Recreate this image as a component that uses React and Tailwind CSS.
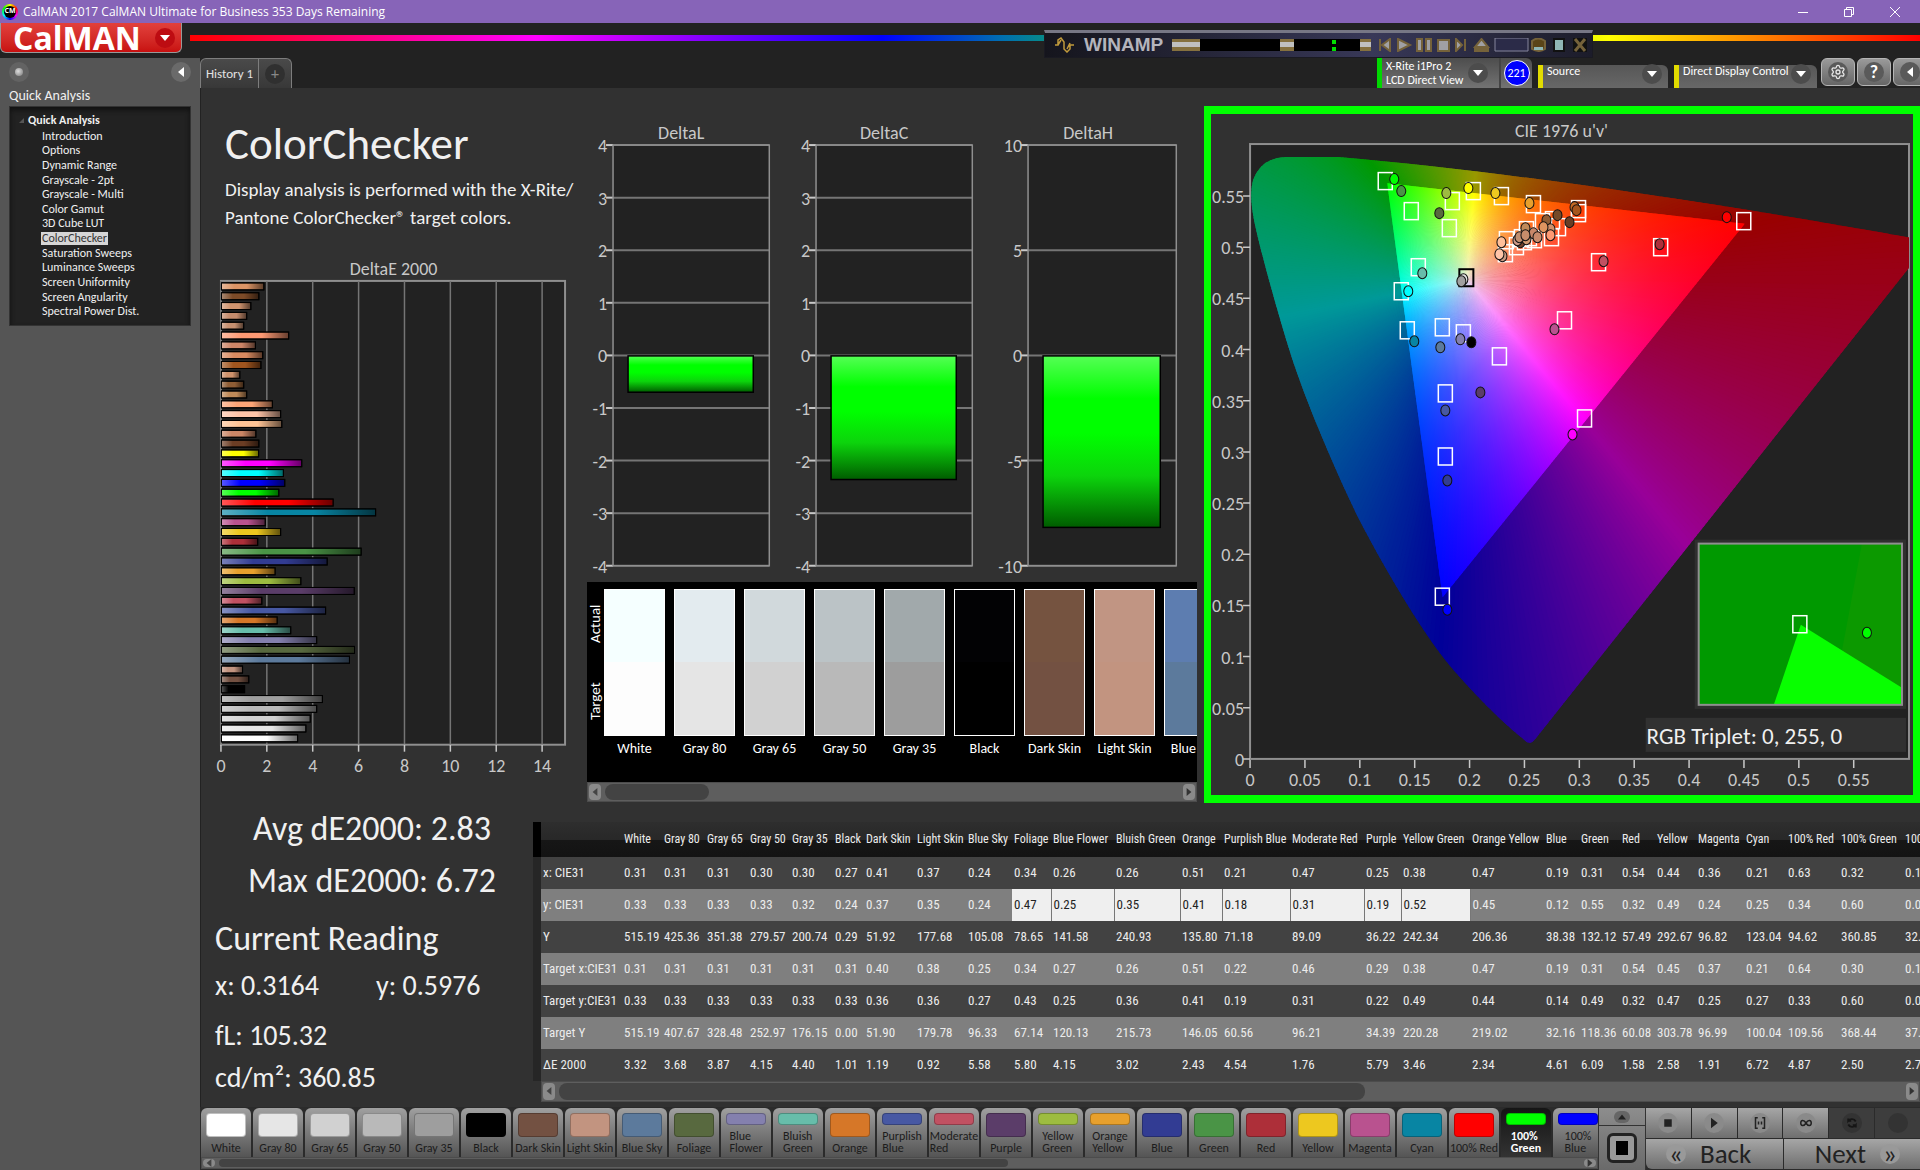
import React from 'react';
import { Settings } from 'lucide-react';

const PAGES = [
  'Introduction', 'Options', 'Dynamic Range', 'Grayscale - 2pt', 'Grayscale - Multi', 'Color Gamut', '3D Cube LUT',
  'ColorChecker', 'Saturation Sweeps', 'Luminance Sweeps', 'Screen Uniformity', 'Screen Angularity', 'Spectral Power Dist.',
];

// top to bottom, as the chart shows them: [dE2000, color]
const DELTA_E = [
  [1.85, '#dc9465'], [1.63, '#7d4b28'], [1.28, '#d0946f'], [1.1, '#c58b6c'], [0.97, '#c79070'], [2.93, '#fd9973'],
  [1.48, '#cd8567'], [1.8, '#d98a60'], [1.72, '#a0551f'], [0.8, '#d0926c'], [0.97, '#8f5d35'], [1.1, '#c08a58'],
  [2.22, '#fda577'], [2.58, '#ffc4a8'], [2.63, '#ffc496'], [1.5, '#cb8666'], [1.63, '#6b3d24'], [1.62, '#ffff00'],
  [3.5, '#ff00ff'], [2.7, '#00ffff'], [2.76, '#0000ff'], [2.5, '#00ff00'], [4.87, '#ff0000'], [6.72, '#0885a3'],
  [1.91, '#b9528f'], [2.58, '#edc81f'], [1.58, '#ad2f39'], [6.09, '#4a9446'], [4.61, '#323c93'], [2.34, '#e7a02d'],
  [3.46, '#9dbc40'], [5.79, '#5b3d69'], [1.76, '#c15162'], [4.54, '#4758a3'], [2.43, '#d67728'], [3.02, '#67bdaa'],
  [4.15, '#8480ae'], [5.8, '#58693f'], [5.58, '#5c7a9c'], [0.92, '#c29480'], [1.19, '#735142'], [1.01, '#000000'],
  [4.4, '#9e9e9e'], [4.15, '#b9b9b9'], [3.87, '#d1d1d1'], [3.68, '#e6e6e6'], [3.32, '#ffffff'],
];

const SWATCHES = [
  ['White', '#f5ffff', '#fdfdfd'],
  ['Gray 80', '#e3ebef', '#e5e5e5'],
  ['Gray 65', '#d1d9dc', '#d1d1d1'],
  ['Gray 50', '#bbc3c6', '#b9b9b9'],
  ['Gray 35', '#a1a9ab', '#9d9d9d'],
  ['Black', '#020204', '#000000'],
  ['Dark Skin', '#755340', '#735142'],
  ['Light Skin', '#c19583', '#c29480'],
  ['Blue Sky', '#5d7db0', '#5c7a9c'],
];

// [name, width, x, y, Y, target x, target y, target Y, dE]
const COLUMNS = [
  ['White', 40, '0.31', '0.33', '515.19', '0.31', '0.33', '515.19', '3.32'],
  ['Gray 80', 43, '0.31', '0.33', '425.36', '0.31', '0.33', '407.67', '3.68'],
  ['Gray 65', 43, '0.31', '0.33', '351.38', '0.31', '0.33', '328.48', '3.87'],
  ['Gray 50', 42, '0.30', '0.33', '279.57', '0.31', '0.33', '252.97', '4.15'],
  ['Gray 35', 43, '0.30', '0.32', '200.74', '0.31', '0.33', '176.15', '4.40'],
  ['Black', 31, '0.27', '0.24', '0.29', '0.31', '0.33', '0.00', '1.01'],
  ['Dark Skin', 51, '0.41', '0.37', '51.92', '0.40', '0.36', '51.90', '1.19'],
  ['Light Skin', 51, '0.37', '0.35', '177.68', '0.38', '0.36', '179.78', '0.92'],
  ['Blue Sky', 46, '0.24', '0.24', '105.08', '0.25', '0.27', '96.33', '5.58'],
  ['Foliage', 39, '0.34', '0.47', '78.65', '0.34', '0.43', '67.14', '5.80'],
  ['Blue Flower', 63, '0.26', '0.25', '141.58', '0.27', '0.25', '120.13', '4.15'],
  ['Bluish Green', 66, '0.26', '0.35', '240.93', '0.26', '0.36', '215.73', '3.02'],
  ['Orange', 42, '0.51', '0.41', '135.80', '0.51', '0.41', '146.05', '2.43'],
  ['Purplish Blue', 68, '0.21', '0.18', '71.18', '0.22', '0.19', '60.56', '4.54'],
  ['Moderate Red', 74, '0.47', '0.31', '89.09', '0.46', '0.31', '96.21', '1.76'],
  ['Purple', 37, '0.25', '0.19', '36.22', '0.29', '0.22', '34.39', '5.79'],
  ['Yellow Green', 69, '0.38', '0.52', '242.34', '0.38', '0.49', '220.28', '3.46'],
  ['Orange Yellow', 74, '0.47', '0.45', '206.36', '0.47', '0.44', '219.02', '2.34'],
  ['Blue', 35, '0.19', '0.12', '38.38', '0.19', '0.14', '32.16', '4.61'],
  ['Green', 41, '0.31', '0.55', '132.12', '0.31', '0.49', '118.36', '6.09'],
  ['Red', 35, '0.54', '0.32', '57.49', '0.54', '0.32', '60.08', '1.58'],
  ['Yellow', 41, '0.44', '0.49', '292.67', '0.45', '0.47', '303.78', '2.58'],
  ['Magenta', 48, '0.36', '0.24', '96.82', '0.37', '0.25', '96.99', '1.91'],
  ['Cyan', 42, '0.21', '0.25', '123.04', '0.21', '0.27', '100.04', '6.72'],
  ['100% Red', 53, '0.63', '0.34', '94.62', '0.64', '0.33', '109.56', '4.87'],
  ['100% Green', 64, '0.32', '0.60', '360.85', '0.30', '0.60', '368.44', '2.50'],
  ['100% Blue', 56, '0.15', '0.05', '32.51', '0.15', '0.06', '37.18', '2.76'],
];

const ROWS = ['x: CIE31', 'y: CIE31', 'Y', 'Target x:CIE31', 'Target y:CIE31', 'Target Y', 'ΔE 2000'];

const PATCHES = [
  ['White', '#ffffff'], ['Gray 80', '#e6e6e6'], ['Gray 65', '#d1d1d1'], ['Gray 50', '#b9b9b9'], ['Gray 35', '#9e9e9e'],
  ['Black', '#000000'], ['Dark Skin', '#735142'], ['Light Skin', '#c29480'], ['Blue Sky', '#5c7a9c'], ['Foliage', '#58693f'],
  ['Blue\nFlower', '#8480ae'], ['Bluish\nGreen', '#67bdaa'], ['Orange', '#d67728'], ['Purplish\nBlue', '#4758a3'],
  ['Moderate\nRed', '#c15162'], ['Purple', '#5b3d69'], ['Yellow\nGreen', '#9dbc40'], ['Orange\nYellow', '#e7a02d'],
  ['Blue', '#323c93'], ['Green', '#4a9446'], ['Red', '#ad2f39'], ['Yellow', '#edc81f'], ['Magenta', '#b9528f'],
  ['Cyan', '#0885a3'], ['100% Red', '#ff0000'], ['100%\nGreen', '#00ff00'], ['100%\nBlue', '#0000ff'],
];

const TARGETS = [
  [174, 67], [200, 97], [241, 87], [262, 77], [290, 82], [238, 114], [322, 90], [367, 95], [367, 99], [532, 107],
  [449, 133], [387, 148], [207, 153], [190, 177], [196, 216], [231, 213], [252, 219], [288, 242], [234, 279],
  [353, 206], [373, 304], [234, 342], [231, 482], [294, 139], [295, 126], [305, 132], [310, 124], [315, 116],
  [331, 108], [341, 106], [347, 113], [340, 123], [323, 125], [313, 127], [318, 123],
];

const READINGS = [
  [183, 65, '#00ff00'], [190, 77, '#4a9446'], [235, 79, '#9dbc40'], [228, 99, '#58693f'], [257, 74, '#ffff00'],
  [284, 79, '#edc81f'], [318, 89, '#e7a02d'], [363, 93, '#c46a25'], [365, 96, '#a6561e'], [515, 103, '#ff0000'],
  [448, 130, '#ad2f39'], [392, 147, '#c15162'], [211, 159, '#67bdaa'], [197, 177, '#00ffff'], [203, 227, '#0885a3'],
  [229, 233, '#5c7a9c'], [249, 225, '#8480ae'], [260, 228, '#000000'], [269, 278, '#5b3d69'], [234, 296, '#4758a3'],
  [343, 215, '#b9528f'], [361, 320, '#ff00ff'], [236, 366, '#323c93'], [236, 495, '#0000ff'], [252, 165, '#e6e6e6'],
  [250, 167, '#a0a0a0'], [346, 101, '#754a28'], [358, 108, '#6b3d24'], [335, 106, '#8f5d35'], [339, 115, '#d0906a'],
  [332, 113, '#e09560'], [339, 121, '#fd9973'], [322, 119, '#c9886a'], [326, 123, '#c98b6c'], [314, 114, '#c08a58'],
  [309, 128, '#704028'], [306, 126, '#cc9988'], [315, 125, '#d09a70'], [308, 123, '#c28f70'], [314, 121, '#c78d6b'],
  [290, 128, '#ffc09a'], [291, 142, '#c89880'], [288, 140, '#ffc4a8'],
];

/* ---------- chromaticity diagram ---------- */

const toX = (u) => 39 + u * 1096;
const toY = (v) => 644 - v * 1022;
const WHITE = [toX(0.1978), toY(0.4683)];
const GAMUT = [[toX(0.4507), toY(0.5229)], [toX(0.125), toY(0.5625)], [toX(0.1754), toY(0.1579)]];

function colorAt(px, py, level) {
  const u = (px - 39) / 1096;
  const v = (644 - py) / 1022;
  const d = 6 * u - 16 * v + 12;
  const x = (9 * u) / d;
  const y = (4 * v) / d;
  const z = 1 - x - y;
  const rgb = [
    3.2406 * x - 1.5372 * y - 0.4986 * z,
    -0.9689 * x + 1.8758 * y + 0.0415 * z,
    0.0557 * x - 0.204 * y + 1.057 * z,
  ].map((c) => Math.max(0, c));
  const max = Math.max(...rgb);
  return `rgb(${rgb.map((c) => Math.round((255 * level * c) / max)).join(',')})`;
}

// distance from the white point to the gamut edge along an angle
function edgeDistance(angle) {
  const dx = Math.cos(angle);
  const dy = Math.sin(angle);
  let best = Infinity;
  GAMUT.forEach(([ax, ay], i) => {
    const [bx, by] = GAMUT[(i + 1) % 3];
    const ex = bx - ax;
    const ey = by - ay;
    const det = ex * dy - ey * dx;
    if (Math.abs(det) < 1e-9) return;
    const t = (ex * (ay - WHITE[1]) - ey * (ax - WHITE[0])) / det;
    if (t > 0 && t < best) best = t;
  });
  return best;
}

const STOPS = [0, 0.1, 0.2, 0.35, 0.5, 0.65, 0.8, 1];
const STEP = Math.PI / 240;
const WEDGES = Array.from({ length: 480 }, (_, i) => {
  const a = i * STEP;
  const mid = a + STEP / 2;
  const r = edgeDistance(mid);
  const at = (angle, dist) => [WHITE[0] + Math.cos(angle) * dist, WHITE[1] + Math.sin(angle) * dist];
  const edge = at(mid, r);
  return {
    points: [WHITE, at(a, 900), at(a + STEP * 1.8, 900)].map((p) => p.join(',')).join(' '),
    edge,
    outer: colorAt(edge[0], edge[1], 0.6),
    stops: STOPS.map((s) => {
      const p = at(mid, r * s);
      return [s, colorAt(p[0], p[1], 1)];
    }),
  };
});

const LOCUS =
  'M74 43 L127 43 C300 58 500 88 718 127 L323 625 Q318 631 313 625 C285 603 250 565 237 549 C215 522 180 467 147 403 C128 364 100 300 84 253 C72 218 50 140 43 106 Q38 80 42 66 Q50 44 74 43Z';

function CieChart() {
  const xs = Array.from({ length: 12 }, (_, i) => Math.round(i * 5) / 100);
  return (
    <svg viewBox="0 0 701 680" className="block w-full" fontSize="18" fill="#c8c8c8" role="img" aria-label="CIE 1976 u'v' diagram">
      <defs>
        <clipPath id="plot"><rect x="39" y="30" width="658" height="614" /></clipPath>
        <clipPath id="locus" clipPath="url(#plot)"><path d={LOCUS} /></clipPath>
        <clipPath id="gamut"><polygon points={GAMUT.map((p) => p.join(',')).join(' ')} /></clipPath>
        {WEDGES.map((w, i) => (
          <linearGradient key={i} id={`w${i}`} gradientUnits="userSpaceOnUse" x1={WHITE[0]} y1={WHITE[1]} x2={w.edge[0]} y2={w.edge[1]}>
            {w.stops.map(([s, c]) => <stop key={s} offset={s} stopColor={c} />)}
          </linearGradient>
        ))}
      </defs>
      <text x="350" y="23" textAnchor="middle">CIE 1976 u'v'</text>
      <rect x="39" y="30" width="658" height="614" fill="#222222" stroke="#8f8f8f" strokeWidth="2" />
      <g clipPath="url(#locus)">
        {WEDGES.map((w, i) => <polygon key={i} points={w.points} fill={w.outer} />)}
      </g>
      <g clipPath="url(#gamut)">
        {WEDGES.map((w, i) => <polygon key={i} points={w.points} fill={`url(#w${i})`} />)}
      </g>
      <g fill="none" stroke="#ffffff" strokeWidth="1.5">
        {TARGETS.map(([x, y], i) => <rect key={i} x={x - 7} y={y - 8.5} width="14" height="17" />)}
      </g>
      <rect x="248" y="155" width="14" height="17" fill="none" stroke="#000000" strokeWidth="2" />
      {READINGS.map(([x, y, c], i) => <ellipse key={i} cx={x} cy={y} rx="4.5" ry="5.5" fill={c} stroke="#111111" />)}

      {xs.map((v) => (
        <g key={v}>
          <path d={`M${toX(v)} 645v8M39 ${toY(v)}h-7`} stroke="#c8c8c8" strokeWidth="1.5" />
          <text x={toX(v)} y="671" textAnchor="middle">{v}</text>
          <text x="33" y={toY(v) + 7} textAnchor="end">{v}</text>
        </g>
      ))}

      <rect x="483" y="425" width="211" height="169" fill="#2f2f2f" />
      <rect x="487" y="429" width="203" height="161" fill="#009900" />
      <path d="M650 429h40v161h-70z" fill="#0c9900" />
      <path d="M589 510L562 590h128v-17z" fill="#08ff00" />
      <rect x="487" y="429" width="203" height="161" fill="none" stroke="#8f8f8f" strokeWidth="2" />
      <rect x="581" y="501" width="14" height="17" fill="none" stroke="#ffffff" strokeWidth="1.5" />
      <ellipse cx="655" cy="518" rx="4.5" ry="5.5" fill="#00ff00" stroke="#111111" />
      <rect x="434" y="603" width="260" height="34" fill="#313131" />
      <text x="435" y="629" fontSize="23" fill="#f0f0f0">RGB Triplet: 0, 255, 0</text>
    </svg>
  );
}

/* ---------- bar charts ---------- */

function DeltaEChart() {
  return (
    <svg viewBox="0 0 387 540" className="block w-full" fontSize="18" fill="#c8c8c8" role="img" aria-label="DeltaE 2000">
      <defs>
        <linearGradient id="gloss">
          <stop offset="0" stopColor="#ffffff" stopOpacity="0.35" />
          <stop offset="0.3" stopColor="#ffffff" stopOpacity="0" />
          <stop offset="0.6" stopColor="#000000" stopOpacity="0" />
          <stop offset="1" stopColor="#000000" stopOpacity="0.6" />
        </linearGradient>
      </defs>
      <text x="193" y="25" textAnchor="middle">DeltaE 2000</text>
      <rect x="20" y="31" width="345" height="465" fill="#222222" stroke="#8f8f8f" strokeWidth="2" />
      {[0, 2, 4, 6, 8, 10, 12, 14].map((n) => (
        <g key={n}>
          <path d={`M${20 + n * 23} 31v465`} stroke="#757575" strokeWidth="1.5" />
          <path d={`M${20 + n * 23} 496v7`} stroke="#c8c8c8" strokeWidth="1.5" />
          <text x={20 + n * 23} y="523" textAnchor="middle">{n}</text>
        </g>
      ))}
      {DELTA_E.map(([value, color], i) => (
        <g key={i} stroke="#000000">
          <rect x="20.5" y={33 + i * 9.85} width={value * 23} height="7" fill={color} />
          <rect x="20.5" y={33 + i * 9.85} width={value * 23} height="7" fill="url(#gloss)" />
        </g>
      ))}
    </svg>
  );
}

function DeltaChart({ title, left, ticks, value }) {
  const max = ticks[0];
  const width = 182 - left;
  const y = (n) => 249 - (n * 210) / max;
  return (
    <svg viewBox="0 0 203 475" className="block w-full" fontSize="18" fill="#c8c8c8" role="img" aria-label={title}>
      <defs>
        <linearGradient id={title} x2="0" y2="1">
          <stop offset="0" stopColor="#55ff55" />
          <stop offset="0.25" stopColor="#00ff00" />
          <stop offset="0.45" stopColor="#00ff00" />
          <stop offset="0.7" stopColor="#0cd40c" />
          <stop offset="1" stopColor="#005c00" />
        </linearGradient>
      </defs>
      <text x="94" y="33" textAnchor="middle">{title}</text>
      <rect x={left} y="39" width={width} height="420" fill="#222222" />
      {ticks.map((n) => (
        <g key={n}>
          <path d={`M${left} ${y(n)}h${width}`} stroke="#757575" strokeWidth="2" />
          <path d={`M${left - 7} ${y(n)}h7`} stroke="#c8c8c8" strokeWidth="2" />
          <text x={left - 6} y={y(n) + 7} textAnchor="end">{n}</text>
        </g>
      ))}
      <rect x={left} y="39" width={width} height="420" fill="none" stroke="#8f8f8f" strokeWidth="1.5" />
      <rect x={left + 15} y="249.5" width={width - 31} height={y(value) - 250} fill={`url(#${title})`} stroke="#000000" strokeWidth="1.5" />
    </svg>
  );
}

/* ---------- small parts ---------- */

function Triangle({ dir = 'down', className = 'h-[10px] w-[10px] fill-white' }) {
  const paths = { down: 'M0 2h10L5 8z', left: 'M8 0v10L2 5z', right: 'M2 0v10l6-5z', up: 'M0 8h10L5 2z' };
  return <svg viewBox="0 0 10 10" className={className}><path d={paths[dir]} /></svg>;
}

function ScrollBar({ thumb, label, className }) {
  return (
    <div role="scrollbar" aria-label={label} aria-orientation="horizontal" aria-controls="main" aria-valuenow={0} className={`flex items-center justify-between gap-1 border border-[#4c4c4c] bg-[#5e5e5e] p-px ${className}`}>
      <button aria-label="Scroll left" className="flex h-full w-3 items-center justify-center rounded bg-[#8a8a8a]">
        <Triangle dir="left" className="h-[10px] w-2 fill-[#444]" />
      </button>
      <div className="h-full flex-1">
        <div className={`h-full rounded-lg bg-[#434343] ${thumb}`} />
      </div>
      <button aria-label="Scroll right" className="flex h-full w-3 items-center justify-center rounded bg-[#8a8a8a]">
        <Triangle dir="right" className="h-[10px] w-2 fill-[#333]" />
      </button>
    </div>
  );
}

function TitleBar() {
  return (
    <div className="flex h-[23px] items-center justify-between bg-[#8764b8] pl-[2px] text-white">
      <div className="flex items-center gap-[5px]">
        <span className="flex h-4 w-4 items-center justify-center rounded-full bg-[conic-gradient(#ff0,#f00,#f0f,#00f,#0ff,#0f0,#ff0)]">
          <span className="flex h-3 w-3 items-center justify-center rounded-full bg-black font-sans text-[7px] font-bold">CM</span>
        </span>
        <h1 className="font-['Open_Sans',sans-serif] text-[12px] leading-4">CalMAN 2017 CalMAN Ultimate for Business 353 Days Remaining</h1>
      </div>
      <div className="flex pr-[2px]">
        <button aria-label="Minimize" className="flex h-5 w-[46px] items-center justify-center">
          <svg viewBox="0 0 12 12" className="h-3 w-3 stroke-white"><path d="M1 6.5h10" /></svg>
        </button>
        <button aria-label="Restore" className="flex h-5 w-[46px] items-center justify-center">
          <svg viewBox="0 0 12 12" className="h-3 w-3 fill-none stroke-white"><path d="M1.500 3.500h7v7h-7zM3.500 3.500v-2h7v7h-2" /></svg>
        </button>
        <button aria-label="Close" className="flex h-5 w-[46px] items-center justify-center">
          <svg viewBox="0 0 12 12" className="h-3 w-3 stroke-white"><path d="M1 1l10 10M11 1L1 11" /></svg>
        </button>
      </div>
    </div>
  );
}

// Winamp in windowshade mode, floating above the header
function Winamp() {
  return (
    <div className="absolute top-[30px] right-[327px] z-10 flex h-7 w-[549px] items-center gap-[6px] border border-[#1a1a22] border-t-[3px] border-t-[#777785] bg-linear-to-r from-[#15151d] via-[#383858] via-60% to-[#1c1c2a] px-[9px]">
      <svg viewBox="0 0 20 16" className="h-4 w-5 shrink-0 fill-none stroke-[#c09a3c] stroke-[1.5]"><path d="M1 8h3V3l3-2 3 4v7l3 3 3-3V8h4M4 8l3-5M13 12l3-6" /></svg>
      <span className="ml-1 w-[82px] shrink-0 font-['Liberation_Sans',sans-serif] text-[19px] leading-5 font-bold text-[#b4b4bc]">WINAMP</span>
      <svg viewBox="0 0 200 12" className="h-3 w-[200px] shrink-0">
        <path d="M0 0h28v12H0zM108 0h14v12h-14zM188 0h11v12h-11z" fill="#85703f" />
        <path d="M0 3h28v5H0zM108 3h14v5h-14zM188 3h11v5h-11z" fill="#c0c0c0" />
        <path d="M28 0h80v12H28zM122 0h66v12h-66z" fill="#000" />
        <path d="M160 1h4v4h-4zM160 8h4v4h-4z" fill="#00e000" />
      </svg>
      <svg viewBox="0 0 210 14" className="h-[14px] w-[210px] shrink-0" fill="#a0a0a4" stroke="#75623a" strokeWidth="2">
        <path d="M2 1v12M12 1v12L4 7zM20 1v12l12-6zM39 1h5v12h-5zM48 1h5v12h-5zM60 2h11v11H60zM78 1v12l6-6zM87 1v12M97 9h13l-6.500-8zM97 11h13v2H97z" />
        <path d="M117 0h33v13h-33z" fill="#2b2b48" stroke="#85859c" strokeWidth="1" />
        <path d="M154 3q6-5 13 0v8q-6 4-13 0z" fill="#5a4418" />
        <path d="M156 9h9v3h-9z" fill="#8fb6b6" stroke="none" />
        <path d="M176 1h10v12h-10z" fill="#8fb6b6" stroke="#111" />
        <path d="M195 0h14v14h-14z" fill="#111" stroke="none" />
        <path d="M197 1l10 12M207 1l-10 12" strokeWidth="3" fill="none" />
      </svg>
    </div>
  );
}

function Header() {
  return (
    <header className="flex h-[35px] items-start gap-2 bg-[#222222]">
      <button aria-label="CalMAN menu" className="flex h-[30px] w-[182px] items-center justify-between rounded-b-md border border-t-0 border-[#999] bg-linear-to-b from-[#e2403c] to-[#c80f0f] pr-[6px] pl-3 text-white">
        <span className="font-['Open_Sans',sans-serif] text-[32px] leading-[28px] font-bold">CalMAN</span>
        <span className="flex h-5 w-5 items-center justify-center rounded-full bg-[#bd0c12]"><Triangle /></span>
      </button>
      <div className="mt-3 h-[6px] flex-1 bg-[linear-gradient(90deg,#f00_0%,#f0f_20%,#00f_40%,#0070b0_47%,#089080_50%,#0c0_62%,#ff0_82%,#f00_100%)]" />
    </header>
  );
}

function Sidebar() {
  return (
    <aside className="w-[200px] shrink-0 bg-[#555555] text-[#f0f0f0]">
      <div className="flex items-center justify-between px-[9px] pt-1">
        <button aria-label="Pin" className="flex h-5 w-5 items-center justify-center rounded-full bg-[#636363]">
          <span className="h-2 w-2 rounded-full bg-[radial-gradient(circle_at_40%_40%,#ddd,#777)]" />
        </button>
        <button aria-label="Collapse panel" className="flex h-5 w-5 items-center justify-center rounded-full bg-[#6a6a6a]"><Triangle dir="left" /></button>
      </div>
      <h2 className="pt-1 pl-[9px] text-[14px] leading-[20px]">Quick Analysis</h2>
      <nav className="mx-[9px] h-[220px] border border-[#333] bg-[#222222] pt-[6px] text-[12px] shadow-[inset_0_3px_5px_#111]">
        <div className="flex items-center gap-1 pb-[2px] pl-[9px] leading-[14px] font-bold">
          <svg viewBox="0 0 5 5" className="h-[5px] w-[5px] fill-[#555]"><path d="M5 0v5H0z" /></svg>
          Quick Analysis
        </div>
        <ul className="grid h-[190px] auto-rows-fr pl-[31px]">
          {PAGES.map((page) => (
            <li key={page} className="flex items-center">
              <a href="#main" className={page === 'ColorChecker' ? 'bg-[#d6d6d6] px-px leading-[13px] text-[#333]' : 'px-px leading-[13px]'}>{page}</a>
            </li>
          ))}
        </ul>
      </nav>
    </aside>
  );
}

function SourceSelect({ label, className }) {
  return (
    <div className={`relative h-[30px] ${className}`}>
      <select aria-label={label} className="h-full w-full appearance-none rounded-tr-md border-l-[5px] border-[#e2dc00] bg-linear-to-b from-[#575757] to-[#6c6c6c] pb-[18px] pl-1 text-[12px] leading-3 text-white">
        <option>{label}</option>
      </select>
      <span className="pointer-events-none absolute top-[6px] right-[6px] flex h-5 w-5 items-center justify-center rounded-full bg-[#4c4c4c]"><Triangle /></span>
    </div>
  );
}

function TopTabs() {
  const iconButton = 'flex h-7 w-[34px] shrink-0 items-center justify-center rounded-md border border-[#b5b5b5] bg-linear-to-b from-[#9a9a9a] to-[#666]';
  return (
    <div className="flex h-[30px] items-start justify-between overflow-hidden bg-[#222222]">
      <div className="flex h-[30px] rounded-t-md border border-b-0 border-[#7d7d7d] bg-linear-to-b from-[#4a4a4a] to-[#383838] text-[#e2e2e2]">
        <button className="w-[58px] border-r border-[#7d7d7d] text-[13px] leading-4">History 1</button>
        <button aria-label="New tab" className="flex w-[32px] items-center justify-center">
          <span className="flex h-5 w-5 items-center justify-center rounded-full bg-[#303030] text-[16px] leading-4 text-[#888]">+</span>
        </button>
      </div>
      <div className="flex items-start text-white">
        <div className="flex h-[30px] w-[155px] items-stretch overflow-hidden rounded-tr-md border-l-[5px] border-[#00d800] bg-linear-to-b from-[#4d4d4d] to-[#737373]">
          <button className="flex flex-1 items-center justify-between pr-[11px] pl-1 text-left text-[12px] leading-[14px]">
            <span className="whitespace-nowrap">X-Rite i1Pro 2<br />LCD Direct View</span>
            <span className="flex h-5 w-5 shrink-0 items-center justify-center rounded-full bg-[#4c4c4c]"><Triangle /></span>
          </button>
          <div className="flex w-[33px] items-center justify-center border-l-2 border-[#444]">
            <span className="flex h-[26px] w-[26px] items-center justify-center rounded-full border border-white bg-[#0000ff] text-[12px]">221</span>
          </div>
        </div>
        <SourceSelect label="Source" className="ml-[6px] w-[130px]" />
        <SourceSelect label="Direct Display Control" className="ml-[6px] w-[143px]" />
        <div className="ml-1 flex w-[99px] gap-[2px] overflow-hidden">
          <button aria-label="Settings" className={iconButton}>
            <span className="flex h-5 w-5 items-center justify-center rounded-full bg-[#5a5a5a]"><Settings size={16} color="#e6e6e6" /></span>
          </button>
          <button aria-label="Help" className={iconButton}>
            <span className="flex h-5 w-5 items-center justify-center rounded-full bg-[#5a5a5a] text-[18px] leading-5 font-bold">?</span>
          </button>
          <button aria-label="Collapse toolbar" className={iconButton}>
            <span className="flex h-5 w-5 items-center justify-center rounded-full bg-[#5a5a5a]"><Triangle dir="left" /></span>
          </button>
        </div>
      </div>
    </div>
  );
}

function SwatchStrip() {
  return (
    <div>
      <div className="flex h-[200px] overflow-hidden bg-black pt-[7px] text-[14px] text-white">
        <div className="flex h-[147px] w-[17px] shrink-0 rotate-180 text-[15px] leading-[17px] [writing-mode:vertical-rl]">
          <span className="flex-1 text-center">Target</span>
          <span className="flex-1 pt-2 text-center">Actual</span>
        </div>
        <div className="flex gap-[9px]">
          {SWATCHES.map(([name, actual, target]) => (
            <figure key={name} className="w-[61px] shrink-0">
              <div className="flex h-[147px] flex-col border border-white">
                <div className="flex-1" style={{ background: actual }} />
                <div className="flex-1" style={{ background: target }} />
              </div>
              <figcaption className="pt-1 text-center leading-[18px] whitespace-nowrap">{name}</figcaption>
            </figure>
          ))}
        </div>
      </div>
      <ScrollBar label="Swatches" thumb="w-[104px]" className="h-5" />
    </div>
  );
}

function ReadingTable() {
  return (
    <div className="min-w-0 flex-1 pt-[19px]">
      <div className="flex">
        <div className="w-2 shrink-0 bg-[#262626]"><div className="h-[35px] bg-black" /></div>
        <div className="min-w-0 flex-1 overflow-hidden">
          <table className="w-[1418px] table-fixed border-collapse text-left font-['Roboto_Condensed',Roboto,sans-serif] text-[13px] whitespace-nowrap text-[#ececec]">
            <colgroup>
              <col className="w-[81px]" />
              {COLUMNS.map((c) => <col key={c[0]} style={{ width: c[1] }} />)}
            </colgroup>
            <thead>
              <tr className="h-[35px] bg-[linear-gradient(#2e2e2e_0%,#282828_50%,#161616_52%,#131313_100%)] text-[12px]">
                <td />
                {COLUMNS.map((c) => <th key={c[0]} scope="col" className="p-0 pl-[2px] font-normal">{c[0]}</th>)}
              </tr>
            </thead>
            <tbody>
              {ROWS.map((row, r) => (
                <tr key={row} className={r % 2 ? 'h-8 bg-[#7f7f7f]' : 'h-8 bg-[#424242]'}>
                  <th scope="row" className="p-0 pl-[2px] font-normal">{row}</th>
                  {COLUMNS.map((c, i) => (
                    <td key={c[0]} className={r === 1 && i > 8 && i < 17 ? 'border-r border-[#777] bg-[#efefef] p-0 pl-[2px] text-[#222]' : 'p-0 pl-[2px]'}>{c[r + 2]}</td>
                  ))}
                </tr>
              ))}
            </tbody>
          </table>
        </div>
      </div>
      <ScrollBar label="Readings" thumb="w-[60%]" className="ml-2 h-[21px]" />
    </div>
  );
}

function Readings() {
  return (
    <div className="w-[332px] shrink-0 pl-[14px] text-[34px] leading-[52px] whitespace-nowrap text-[#f0f0f0]">
      <div className="pr-1 text-center">
        <p>Avg dE2000: 2.83</p>
        <p>Max dE2000: 6.72</p>
      </div>
      <h3 className="pt-[6px]">Current Reading</h3>
      <div className="text-[28px] leading-[42px]">
        <p className="flex"><span className="w-[161px]">x: 0.3164</span><span>y: 0.5976</span></p>
        <p className="pt-2">fL: 105.32</p>
        <p>cd/m²: 360.85</p>
      </div>
    </div>
  );
}

const ICONS = {
  Stop: <path d="M3 3h10v10H3z" />,
  Read: <path d="M4 1l9 7-9 7z" />,
  'Read series': <path d="M5 1H2v14h3M11 1h3v14h-3M5 8h2M9 8h2M6 6v4M10 6v4" fill="none" stroke="#222" strokeWidth="2" />,
  'Read continuous': <path d="M8 8C5 3 1 4 1 8s4 5 7 0 7-4 7 0-4 5-7 0z" fill="none" stroke="#222" strokeWidth="2" />,
  Refresh: <path d="M13 6A6 6 0 0 0 3 5V2M3 5h4M3 10a6 6 0 0 0 10 1v3M13 11H9" fill="none" stroke="#161616" strokeWidth="2.500" />,
  Record: null,
};

function BottomBar() {
  return (
    <footer className="flex h-[63px] bg-[#2b2b2b] pt-px pl-px">
      <div className="min-w-0 flex-1 overflow-hidden">
        <div className="flex h-[49px] gap-[2px] overflow-hidden">
          {PATCHES.map(([name, color]) => {
            const tall = !name.includes('\n');
            const on = color === '#00ff00';
            return (
              <button
                key={name}
                className={`flex w-[50px] shrink-0 flex-col items-center justify-between rounded-t-md pt-[5px] text-[12px] leading-3 whitespace-pre ${
                  on ? 'bg-linear-to-b from-[#151515] to-[#333] font-bold text-white' : 'bg-linear-to-b from-[#a0a0a0] to-[#555] text-[#1c1c1c]'
                }`}
              >
                <span className={tall ? 'h-6 w-10 rounded border border-black/25' : 'h-3 w-10 rounded border border-black/25'} style={{ background: color }} />
                <span className="pb-[3px] text-left">{name}</span>
              </button>
            );
          })}
        </div>
        <ScrollBar label="Patches" thumb="w-[58%]" className="h-3" />
      </div>
      <div className="flex w-12 shrink-0 flex-col border-x border-[#333] bg-linear-to-b from-[#8d8d8d] to-[#6a6a6a]">
        <button aria-label="Expand" className="flex h-[18px] items-center justify-center border-b border-[#333]">
          <span className="flex h-3 w-4 items-center justify-center rounded-full bg-[#666]"><Triangle dir="up" className="h-2 w-2 fill-[#222]" /></span>
        </button>
        <button aria-label="Pattern window" className="flex flex-1 items-center justify-center">
          <span className="flex h-[30px] w-[30px] items-center justify-center rounded-md border-[3px] border-[#222] bg-[#999]"><span className="h-[14px] w-3 bg-black" /></span>
        </button>
      </div>
      <div className="flex w-[274px] shrink-0 flex-col gap-px">
        <div className="grid h-[30px] grid-cols-6 gap-px">
          {Object.entries(ICONS).map(([name, icon], i) => (
            <button key={name} aria-label={name} className={`flex items-center justify-center ${i > 3 ? 'bg-[#3d3d3d]' : 'bg-linear-to-b from-[#a6a6a6] to-[#6f6f6f]'}`}>
              <span className={`flex h-5 w-5 items-center justify-center rounded-full ${i > 3 ? 'bg-[#333]' : 'bg-[#8a8a8a]'}`}>
                <svg viewBox="0 0 16 16" className="h-3 w-3 fill-[#222]">{icon}</svg>
              </span>
            </button>
          ))}
        </div>
        <div className="grid h-[30px] grid-cols-2 gap-px text-[27px] leading-[28px] text-[#222]">
          <button className="flex items-center gap-[14px] rounded-bl-md bg-linear-to-b from-[#a6a6a6] to-[#6f6f6f] pl-5">
            <span className="flex h-5 w-5 items-center justify-center rounded-full bg-[#999] leading-5">«</span>Back
          </button>
          <button className="flex items-center justify-end gap-[14px] bg-linear-to-b from-[#a6a6a6] to-[#6f6f6f] pr-5">
            Next<span className="flex h-5 w-5 items-center justify-center rounded-full bg-[#999] leading-5">»</span>
          </button>
        </div>
      </div>
    </footer>
  );
}

export default function App() {
  return (
    <div className="relative flex min-h-screen flex-col overflow-hidden bg-[#222222] font-['Carlito',Lato,sans-serif]">
      <TitleBar />
      <Header />
      <Winamp />
      <div className="flex flex-1">
        <Sidebar />
        <div className="flex min-w-0 flex-1 flex-col bg-[#313131]">
          <TopTabs />
          <main id="main" className="flex-1 border-l border-[#222]">
            <div className="grid grid-cols-[minmax(0,386fr)_minmax(0,610fr)_minmax(0,723fr)] pt-[18px]">
              <section>
                <h2 className="pt-2 pl-6 text-[45px] leading-[60px] text-[#f0f0f0]">ColorChecker</h2>
                <p className="pt-[2px] pl-6 text-[19px] leading-[28px] whitespace-nowrap text-[#f0f0f0]">
                  Display analysis is performed with the X-Rite/<br />
                  Pantone ColorChecker® target colors.
                </p>
                <div className="pt-[18px]"><DeltaEChart /></div>
              </section>
              <section>
                <div className="grid grid-cols-3">
                  <DeltaChart title="DeltaL" left={26} ticks={[4, 3, 2, 1, 0, -1, -2, -3, -4]} value={-0.71} />
                  <DeltaChart title="DeltaC" left={26} ticks={[4, 3, 2, 1, 0, -1, -2, -3, -4]} value={-2.37} />
                  <DeltaChart title="DeltaH" left={34} ticks={[10, 5, 0, -5, -10]} value={-8.2} />
                </div>
                <SwatchStrip />
              </section>
              <section className="pl-[7px]">
                <div className="border-x-[7px] border-y-8 border-[#00ff00]"><CieChart /></div>
              </section>
            </div>
            <div className="flex">
              <Readings />
              <ReadingTable />
            </div>
          </main>
          <BottomBar />
        </div>
      </div>
    </div>
  );
}
